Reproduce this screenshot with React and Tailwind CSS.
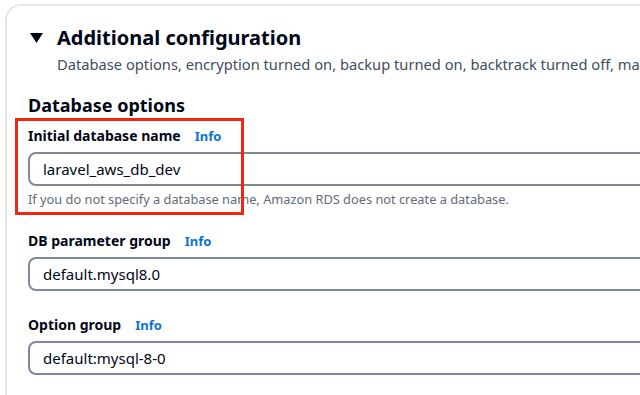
import React from 'react'

const fields = [
  { label: 'DB parameter group', value: 'default.mysql8.0' },
  { label: 'Option group', value: 'default:mysql-8-0' },
]

function Label({ children }) {
  return (
    <div className="flex items-center gap-[14px] h-[20px]">
      <span className="text-[14px] font-bold text-[#000716] leading-[20px]">{children}</span>
      <span className="text-[13px] font-bold text-[#0972d3] leading-[20px]">Info</span>
    </div>
  )
}

function Input({ value }) {
  return (
    <div className="mt-[6px] h-[34px] w-[700px] rounded-[8px] border-2 border-[#7d8998] bg-white flex items-center pl-[13px]">
      <span className="text-[15px] text-[#000716] leading-[20px]">{value}</span>
    </div>
  )
}

export default function App() {
  return (
    <div className="relative w-[640px] h-[395px] overflow-hidden bg-white pl-[5px] pt-[4px]" style={{ fontFamily: '"Noto Sans", "Open Sans", sans-serif' }}>
      <div className="w-[720px] h-[420px] rounded-tl-[16px] border-l-2 border-t-2 border-[#e4e6e9] bg-white pl-[21px] pt-[19px]">
        {/* Header */}
        <div className="flex items-start">
          <svg width="13" height="11" viewBox="0 0 13 11" className="ml-[2px] mt-[8px] shrink-0">
            <polygon points="0,0 13,0 6.5,10" fill="#000716" />
          </svg>
          <div className="ml-[14px]">
            <h2 className="text-[20px] font-bold text-[#000716] leading-[26px]">Additional configuration</h2>
            <p className="mt-[3px] text-[14.7px] text-[#414d5c] leading-[20px] whitespace-nowrap">
              Database options, encryption turned on, backup turned on, backtrack turned off, maintenance, CloudWatch Logs, delete protection turned off
            </p>
          </div>
        </div>

        <h3 className="mt-[19px] text-[18px] font-bold text-[#000716] leading-[24px]">Database options</h3>

        {/* Initial database name */}
        <div className="mt-[9px]">
          <Label>Initial database name</Label>
          <Input value="laravel_aws_db_dev" />
          <p className="mt-[5px] text-[12.8px] text-[#5f6b7a] leading-[16px] whitespace-nowrap">
            If you do not specify a database name, Amazon RDS does not create a database.
          </p>
        </div>

        {fields.map((f) => (
          <div key={f.label} className="mt-[24px]">
            <Label>{f.label}</Label>
            <Input value={f.value} />
          </div>
        ))}
      </div>

      {/* red annotation box */}
      <div className="absolute left-[15px] top-[118px] w-[229px] h-[97px] border-[3px] border-[#f5260f]" />
    </div>
  )
}
